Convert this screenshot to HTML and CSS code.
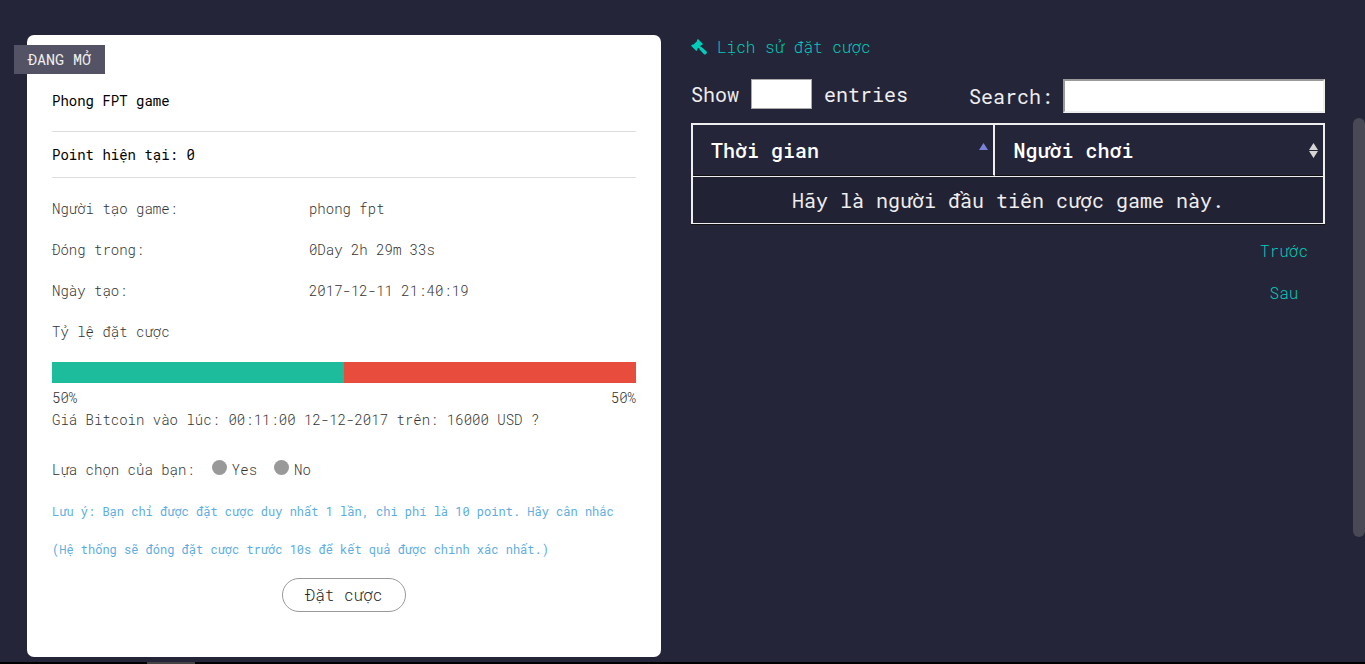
FILE: index.html
```html
<!DOCTYPE html>
<html lang="vi">
<head>
<meta charset="utf-8">
<title>Phong FPT game</title>
<link rel="stylesheet" href="styles.css">
</head>
<body>
<main class="page">
  <section class="card">
    <span class="badge">ĐANG MỞ</span>
    <h1 class="card-title">Phong FPT game</h1>
    <p class="points">Point hiện tại: 0</p>
    <dl class="details">
      <dt>Người tạo game:</dt><dd>phong fpt</dd>
      <dt>Đóng trong:</dt><dd>0Day 2h 29m 33s</dd>
      <dt>Ngày tạo:</dt><dd>2017-12-11 21:40:19</dd>
      <dt>Tỷ lệ đặt cược</dt>
    </dl>
    <div class="ratio-bar">
      <div class="ratio-yes" style="width: 50%"></div>
      <div class="ratio-no" style="width: 50%"></div>
    </div>
    <div class="ratio-labels"><span>50%</span><span>50%</span></div>
    <p class="question">Giá Bitcoin vào lúc: 00:11:00 12-12-2017 trên: 16000 USD ?</p>
    <form class="bet-form">
      <fieldset class="choices">
        <span class="choices-label">Lựa chọn của bạn:</span>
        <label class="choice" for="yes"><input class="radio" type="radio" id="yes" name="bet">Yes</label>
        <label class="choice" for="no"><input class="radio" type="radio" id="no" name="bet">No</label>
      </fieldset>
      <p class="note">Lưu ý: Bạn chỉ được đặt cược duy nhất 1 lần, chi phí là 10 point. Hãy cân nhắc</p>
      <p class="note">(Hệ thống sẽ đóng đặt cược trước 10s để kết quả được chính xác nhất.)</p>
      <button class="bet-button" type="button">Đặt cược</button>
    </form>
  </section>

  <section class="history">
    <h2 class="history-title">
      <svg class="gavel" viewBox="0 0 16 16" aria-hidden="true"><path d="M7 0 12 5 10.800 6.200 10.200 5.900 9.200 7.200 10 8 10.800 8.200 15.400 12.300Q16.300 13.500 15.400 14.700T13 15.200L8.600 10.400 8.400 9.600 7.600 8.800 6.200 10 6.500 10.800 5.300 12 0 6.800 1.400 5.400 2.200 5.800 6.200 2 5.800 1.200Z"/></svg>
      Lịch sử đặt cược
    </h2>
    <div class="controls">
      <label class="length">Show <select class="length-select"></select> entries</label>
      <label class="search">Search: <input class="search-input" type="search"></label>
    </div>
    <table class="bets">
      <thead>
        <tr>
          <th class="col-time"><div class="head">Thời gian
            <svg class="sort sort-asc" viewBox="0 0 9 16" aria-hidden="true"><path d="M4.500 1 9 8H0Z"/></svg></div></th>
          <th><div class="head">Người chơi
            <svg class="sort" viewBox="0 0 9 16" aria-hidden="true"><path d="M4.500 1 9 8H0ZM0 9H9L4.500 16Z"/></svg></div></th>
        </tr>
      </thead>
      <tbody>
        <tr><td colspan="2">Hãy là người đầu tiên cược game này.</td></tr>
      </tbody>
    </table>
    <nav class="pager">
      <a href="#">Trước</a>
      <a href="#">Sau</a>
    </nav>
  </section>
</main>
<div class="scroll-thumb"></div>
<footer class="strip"><span class="strip-item"></span></footer>
</body>
</html>
```

FILE: styles.css
```css
* {
  box-sizing: border-box;
}

body {
  margin: 0;
  min-height: 100vh;
  display: flex;
  flex-direction: column;
  background: #25253a;
  color: #eee;
  font-family: "Roboto Mono", "Liberation Mono", monospace;
  font-size: 20px;
}

h1, h2, p, dl, dd, fieldset {
  margin: 0;
  padding: 0;
  border: 0;
}

input, select, button {
  font: inherit;
  margin: 0;
}

.page {
  flex: 1;
  display: grid;
  grid-template-columns: minmax(0, 1fr) minmax(0, 1fr);
  gap: 30px;
  padding: 35px 40px 5px 27px;
}

.card {
  position: relative;
  padding: 55px 25px 45px;
  border-radius: 7px;
  background: #fff;
  color: #333;
  font-size: 14px;
  font-weight: 300;
  line-height: 22px;
}

.badge {
  position: absolute;
  top: 10px;
  left: -13px;
  padding: 0 14px;
  background: #545365;
  color: #eee;
  font-size: 15px;
  font-weight: 400;
  line-height: 29px;
}

.card-title,
.points {
  border-bottom: 1px solid #ddd;
  color: #000;
  font-size: 14px;
  font-weight: 400;
}

.card-title {
  padding-bottom: 19px;
}

.points {
  padding: 12px 0 11px;
}

.details {
  display: grid;
  grid-template-columns: 44% 56%;
  padding-top: 10px;
  line-height: 41px;
}

.ratio-bar {
  display: flex;
  height: 21px;
  margin: 10px 0 4px;
}

.ratio-yes {
  background: #1dbc9c;
}

.ratio-no {
  background: #e84c3d;
}

.ratio-labels {
  display: flex;
  justify-content: space-between;
}

.choices {
  display: flex;
  gap: 17px;
  margin: 28px 0 11px;
}

.choice {
  display: flex;
  gap: 5px;
}

.radio {
  appearance: none;
  width: 15px;
  height: 15px;
  margin-top: 1px;
  border-radius: 50%;
  background: #999;
}

.note {
  color: #5dade2;
  font-size: 12px;
  font-weight: 400;
  line-height: 38px;
}

.bet-button {
  display: block;
  height: 34px;
  margin: 10px auto 0;
  padding: 0 23px;
  border: 1px solid #999;
  border-radius: 17px;
  background: #fff;
  color: #222;
  font-size: 16px;
}

.history-title {
  display: flex;
  align-items: center;
  gap: 10px;
  margin-bottom: 20px;
  color: #00cdb9;
  font-size: 16px;
  font-weight: 300;
  line-height: 24px;
}

.gavel {
  width: 16px;
  height: 16px;
  fill: #00cdb9;
}

.controls {
  display: flex;
  justify-content: space-between;
  align-items: flex-start;
  margin-bottom: 10px;
}

.length,
.search {
  display: flex;
  align-items: center;
}

.length {
  gap: 12px;
}

.search {
  gap: 10px;
}

.length-select {
  appearance: none;
  width: 61px;
  height: 30px;
  border: 1px solid #a9a9a9;
  border-radius: 0;
  background: #fff;
}

.search-input {
  appearance: none;
  width: 262px;
  height: 34px;
  border: 2px solid;
  border-color: #9a9a9a #eee #eee #9a9a9a;
  border-radius: 0;
  background: #fff;
}

.bets {
  width: 100%;
  border: 2px solid #eee;
  border-bottom-width: 1px;
  border-spacing: 0;
  box-shadow: 0 1px #111;
  line-height: 26px;
}

.bets th {
  padding: 12px 5px 12px 18px;
  border-bottom: 1px solid #111;
  color: #fff;
  font-weight: 500;
  text-align: left;
}

.bets .col-time {
  width: 48%;
  border-right: 2px solid #eee;
}

.head {
  display: flex;
  align-items: center;
  justify-content: space-between;
}

.sort {
  width: 9px;
  height: 16px;
  fill: #d5d5d5;
}

.sort-asc {
  fill: #7b80dc;
}

.bets td {
  padding: 10px;
  border-top: 1px solid #eee;
  background: #222235;
  text-align: center;
}

.pager {
  display: flex;
  flex-direction: column;
  width: max-content;
  margin: 6px 17px 0 auto;
  font-size: 16px;
  font-weight: 300;
  line-height: 42px;
  text-align: center;
}

.pager a {
  color: #00cdb9;
  text-decoration: none;
}

.scroll-thumb {
  position: fixed;
  top: 118px;
  right: 0;
  width: 12px;
  height: 419px;
  border-radius: 6px;
  background: #484955;
}

.strip {
  display: flex;
  height: 2px;
  padding-left: 147px;
  background: #000;
}

.strip-item {
  width: 48px;
  background: #444;
}
```
